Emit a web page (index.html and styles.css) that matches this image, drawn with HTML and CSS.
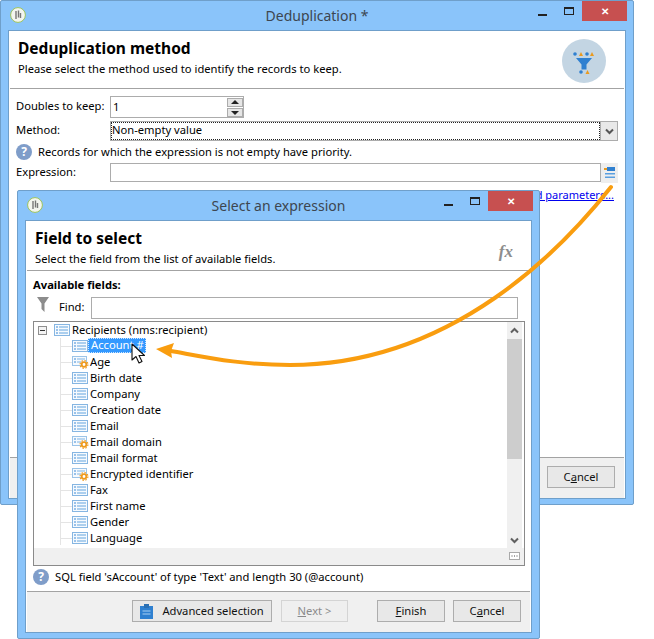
FILE: index.html
```html
<!DOCTYPE html>
<html lang="en">
<head>
    <meta charset="UTF-8">
    <title>Deduplication</title>
    <link rel="stylesheet" href="styles.css">
</head>
<body>
<svg class="defs" width="0" height="0">
    <symbol id="field" viewBox="0 0 16 12">
        <rect x="0.5" y="0.5" width="15" height="11" fill="#f6fafe" stroke="#86b6e2"/>
        <rect x="2" y="2.500" width="2" height="1" fill="#3c8ad6"/>
        <rect x="5" y="2.500" width="9" height="1" fill="#63a3de"/>
        <rect x="2" y="5.500" width="2" height="1" fill="#3c8ad6"/>
        <rect x="5" y="5.500" width="9" height="1" fill="#63a3de"/>
        <rect x="2" y="8.500" width="2" height="1" fill="#3c8ad6"/>
        <rect x="5" y="8.500" width="9" height="1" fill="#63a3de"/>
    </symbol>
    <symbol id="calc" viewBox="0 0 17 13">
        <rect x="0.5" y="0.5" width="14" height="9" fill="#f6fafe" stroke="#9cc4e8"/>
        <rect x="2" y="2.500" width="2" height="1" fill="#3c8ad6"/>
        <rect x="5" y="2.500" width="8" height="1" fill="#7fb3e3"/>
        <rect x="2" y="5.500" width="2" height="1" fill="#3c8ad6"/>
        <rect x="5" y="5.500" width="4" height="1" fill="#7fb3e3"/>
        <circle cx="12" cy="8.500" r="2.300" fill="#fff" stroke="#ee9a1e" stroke-width="1.800"/>
        <circle cx="12" cy="8.500" r="3.900" fill="none" stroke="#ee9a1e" stroke-width="1.200" stroke-dasharray="1.500 1.560"/>
    </symbol>
    <symbol id="logo" viewBox="0 0 16 16">
        <circle cx="8" cy="8" r="7.4" fill="#f3f5ef" stroke="#9cc35c"/>
        <path d="M6 4v8M8.5 3.500v7M10.500 6v5" stroke="#777" stroke-width="1.400" fill="none"/>
    </symbol>
</svg>

<div class="window main-window">
    <div class="titlebar">
        <svg class="app-icon"><use href="#logo"/></svg>
        <div class="title">Deduplication *</div>
        <div class="controls">
            <span class="ctl-min"></span>
            <span class="ctl-max"></span>
            <span class="ctl-close">&#x2715;</span>
        </div>
    </div>
    <div class="client">
        <div class="header main-header">
            <div>
                <h1>Deduplication method</h1>
                <p>Please select the method used to identify the records to keep.</p>
            </div>
            <svg class="method-icon" width="44" height="44" viewBox="0 0 44 44">
                <circle cx="22" cy="22" r="22" fill="#c3d5e3"/>
                <circle cx="13" cy="15" r="1.800" fill="#2f80d0"/>
                <path d="M17 17l2-4 2 4zM28 17l2-4 2 4z" fill="#ea9a1f"/>
                <circle cx="25" cy="15" r="1.800" fill="#2f80d0"/>
                <path d="M14 19h16l-5.500 6.500v5h-5v-5z" fill="#2f80d0"/>
                <circle cx="19" cy="33" r="1.800" fill="#2f80d0"/>
                <path d="M23.500 35l2-4 2 4z" fill="#ea9a1f"/>
            </svg>
        </div>
        <div class="form">
            <div class="row row-spin">
                <label>Doubles to keep:</label>
                <div class="spin">
                    <span class="spin-value">1</span>
                    <div class="spin-btns">
                        <span class="up"></span>
                        <span class="down"></span>
                    </div>
                </div>
            </div>
            <div class="row row-select">
                <label>Method:</label>
                <div class="select">
                    <span class="select-value">Non-empty value</span>
                    <span class="select-btn"><svg width="9" height="7" viewBox="0 0 9 7"><path d="M1 1.500l3.500 3.500 3.500-3.500" fill="none" stroke="#555" stroke-width="2"/></svg></span>
                </div>
            </div>
            <div class="info-row">
                <span class="help">?</span>
                <span>Records for which the expression is not empty have priority.</span>
            </div>
            <div class="row row-expr">
                <label>Expression:</label>
                <div class="expr">
                    <span class="expr-input"></span>
                    <span class="expr-btn">
                        <svg width="11" height="12" viewBox="0 0 11 12">
                            <rect x="0" y="1" width="3" height="2" fill="#ea9a1f"/>
                            <rect x="3" y="0" width="8" height="4" fill="#2f80d0"/>
                            <rect x="1" y="6" width="10" height="1.500" fill="#5a9fe0"/>
                            <rect x="1" y="9.500" width="10" height="1.500" fill="#5a9fe0"/>
                        </svg>
                    </span>
                </div>
            </div>
            <div class="link-row"><a href="#">d parameters...</a></div>
        </div>
        <div class="footer">
            <button class="btn"><span>C<u>a</u>ncel</span></button>
        </div>
    </div>
</div>

<div class="window expr-window">
    <div class="titlebar">
        <svg class="app-icon"><use href="#logo"/></svg>
        <div class="title">Select an expression</div>
        <div class="controls">
            <span class="ctl-min"></span>
            <span class="ctl-max"></span>
            <span class="ctl-close">&#x2715;</span>
        </div>
    </div>
    <div class="client">
        <div class="header expr-header">
            <div>
                <h1>Field to select</h1>
                <p>Select the field from the list of available fields.</p>
            </div>
            <span class="fx">fx</span>
        </div>
        <div class="picker">
            <div class="picker-label">Available fields:</div>
            <div class="find">
                <svg width="12" height="15" viewBox="0 0 12 15"><path d="M0 0h12L7.500 6.500V15l-3-3V6.500z" fill="#8c8c8c"/></svg>
                <span class="find-label">Find:</span>
                <span class="find-input"></span>
            </div>
            <div class="tree">
                <div class="tree-top">
                    <div class="tree-list">
                        <div class="root">
                            <span class="expander"></span>
                            <svg class="root-icon"><use href="#field"/></svg>
                            <span class="root-name">Recipients (nms:recipient)</span>
                        </div>
                        <ul>
                            <li><svg class="leaf"><use href="#field"/></svg><span class="selected">Account #</span></li>
                            <li><svg class="leaf-calc"><use href="#calc"/></svg><span>Age</span></li>
                            <li><svg class="leaf"><use href="#field"/></svg><span>Birth date</span></li>
                            <li><svg class="leaf"><use href="#field"/></svg><span>Company</span></li>
                            <li><svg class="leaf"><use href="#field"/></svg><span>Creation date</span></li>
                            <li><svg class="leaf"><use href="#field"/></svg><span>Email</span></li>
                            <li><svg class="leaf-calc"><use href="#calc"/></svg><span>Email domain</span></li>
                            <li><svg class="leaf"><use href="#field"/></svg><span>Email format</span></li>
                            <li><svg class="leaf-calc"><use href="#calc"/></svg><span>Encrypted identifier</span></li>
                            <li><svg class="leaf"><use href="#field"/></svg><span>Fax</span></li>
                            <li><svg class="leaf"><use href="#field"/></svg><span>First name</span></li>
                            <li><svg class="leaf"><use href="#field"/></svg><span>Gender</span></li>
                            <li><svg class="leaf"><use href="#field"/></svg><span>Language</span></li>
                        </ul>
                    </div>
                    <div class="vscroll">
                        <svg width="9" height="7" viewBox="0 0 9 7"><path d="M1 5.500l3.500-3.500 3.500 3.500" fill="none" stroke="#606060" stroke-width="2"/></svg>
                        <span class="thumb"></span>
                        <svg class="scroll-down" width="9" height="7" viewBox="0 0 9 7"><path d="M1 1.500l3.500 3.500 3.500-3.500" fill="none" stroke="#606060" stroke-width="2"/></svg>
                    </div>
                </div>
                <div class="hscroll">
                    <span class="corner">
                        <svg width="11" height="8" viewBox="0 0 11 8"><rect x="0.500" y="0.500" width="10" height="7" fill="#fff" stroke="#a9a9a9"/><path d="M2.500 4h1M5 4h1M7.500 4h1" stroke="#444"/></svg>
                    </span>
                </div>
            </div>
            <div class="info-row sql-row">
                <span class="help">?</span>
                <span>SQL field 'sAccount' of type 'Text' and length 30 (@account)</span>
            </div>
        </div>
        <div class="footer">
            <button class="btn btn-advanced">
                <svg width="13" height="15" viewBox="0 0 13 15"><rect x="0" y="2" width="13" height="13" fill="#2f80d0"/><rect x="4" y="0" width="5" height="4" fill="#2a6fb3"/><path d="M2.500 7h8M2.500 10h8" stroke="#a9d0f3"/></svg>
                <span>Advanced selection</span>
            </button>
            <button class="btn btn-next" disabled><span><u>N</u>ext &gt;</span></button>
            <button class="btn btn-finish"><span><u>F</u>inish</span></button>
            <button class="btn"><span>C<u>a</u>ncel</span></button>
        </div>
    </div>
</div>

<svg class="callout" width="654" height="639" viewBox="0 0 654 639">
    <path d="M611 187C565 245 455 365 290 365C240 365 205 357 171 351" fill="none" stroke="#f99d0f" stroke-width="4" stroke-linecap="round"/>
    <path d="M156 349L174 343L171 351L172 358Z" fill="#f99d0f"/>
</svg>
<svg class="pointer" width="16" height="22" viewBox="0 0 16 22">
    <path d="M1 1V17L5 13.500L8 20L11 18.500L8 12.500H13.500Z" fill="#fff" stroke="#111" stroke-width="1.100" stroke-linejoin="round"/>
</svg>
</body>
</html>
```

FILE: styles.css
```css
html, body {
    margin: 0;
    padding: 0;
}

body {
    position: relative;
    width: 654px;
    height: 639px;
    overflow: hidden;
    background-color: #fff;
    font-family: "Noto Sans", sans-serif;
    font-size: 11.2px;
    color: #000;
}

.defs {
    position: absolute;
}

/* windows */
.window {
    position: absolute;
    box-sizing: border-box;
    display: flex;
    flex-direction: column;
    background-color: #8ac4fa;
    border: 1px solid #6f9fca;
    border-radius: 2px;
    padding: 0 7px 5px;
}

.main-window {
    left: 0;
    top: 0;
    width: 634px;
    height: 505px;
}

.expr-window {
    left: 17px;
    top: 190px;
    width: 523px;
    height: 449px;
}

.titlebar {
    position: relative;
    flex: none;
    height: 29px;
    display: flex;
    align-items: center;
    justify-content: center;
}

.app-icon {
    position: absolute;
    left: 2px;
    top: 6px;
    width: 16px;
    height: 16px;
}

.title {
    font-size: 14px;
    color: #3d4650;
}

.controls {
    position: absolute;
    right: -1px;
    top: 0;
    display: flex;
}

.ctl-min {
    width: 9px;
    height: 2px;
    margin: 13px 17px 0 0;
    background-color: #222;
}

.ctl-max {
    box-sizing: border-box;
    width: 10px;
    height: 8px;
    margin: 6px 8px 0 0;
    border: 1px solid #222;
    border-top-width: 2px;
}

.ctl-close {
    width: 45px;
    height: 20px;
    line-height: 20px;
    text-align: center;
    background-color: #c75050;
    color: #fff;
    font-size: 10px;
    font-weight: bold;
}

.client {
    flex: 1;
    min-height: 0;
    display: flex;
    flex-direction: column;
    background-color: #fff;
    border: 1px solid #6f9fca;
    padding: 0 1px;
}

/* header strip */
.header {
    flex: none;
    box-sizing: border-box;
    display: flex;
    justify-content: space-between;
    padding: 7px 0 0 8px;
    border-bottom: 1px solid #a3a3a3;
}

.main-header {
    height: 58px;
}

.expr-header {
    height: 50px;
}

.header h1 {
    margin: 0;
    font-size: 15.5px;
    line-height: 20px;
    font-weight: bold;
}

.header p {
    margin: 3px 0 0;
    line-height: 15px;
}

.method-icon {
    margin: 1px 18px 0 0;
}

.fx {
    margin: 14px 17px 0 0;
    font-family: "Liberation Serif", serif;
    font-style: italic;
    font-weight: bold;
    font-size: 17px;
    line-height: 20px;
    color: #8d8d8d;
}

/* main form */
.form {
    flex: 1;
    min-height: 0;
    padding: 7px 6px 0;
}

.row {
    display: flex;
    align-items: center;
}

.row label {
    flex: none;
    width: 94px;
    margin-bottom: 4px;
}

.row-spin {
    height: 22px;
}

.spin {
    box-sizing: border-box;
    width: 134px;
    height: 22px;
    display: flex;
    align-items: center;
    justify-content: space-between;
    padding: 0 0 0 2px;
    border: 1px solid #acacac;
}

.spin-value {
    margin-bottom: 2px;
}

.spin-btns {
    display: flex;
    flex-direction: column;
    gap: 1px;
}

.spin-btns span {
    position: relative;
    box-sizing: border-box;
    width: 16px;
    height: 9px;
    background-color: #e6e6e6;
    border: 1px solid #acacac;
}

.spin-btns .up::after,
.spin-btns .down::after {
    content: "";
    position: absolute;
    left: 3px;
    width: 0;
    height: 0;
    border-left: 4px solid transparent;
    border-right: 4px solid transparent;
}

.spin-btns .up::after {
    top: 1px;
    border-bottom: 4px solid #222;
}

.spin-btns .down::after {
    top: 2px;
    border-top: 4px solid #222;
}

.row-select {
    height: 20px;
    margin-top: 3px;
}

.select {
    flex: 1;
    height: 20px;
    box-sizing: border-box;
    display: flex;
    border: 1px solid #acacac;
}

.select-value {
    flex: 1;
    line-height: 15px;
    padding-left: 1px;
    outline: 1px dotted #222;
    outline-offset: -1px;
}

.select-btn {
    flex: none;
    width: 16px;
    display: flex;
    align-items: center;
    justify-content: center;
    background-color: #e9e9e9;
    border-left: 1px solid #acacac;
}

.info-row {
    flex: none;
    height: 22px;
    display: flex;
    align-items: center;
    gap: 6px;
}

.info-row span:last-child {
    margin-bottom: 2px;
}

.help {
    flex: none;
    width: 16px;
    height: 16px;
    border-radius: 50%;
    background-color: #7f9dc9;
    color: #fff;
    font-size: 12px;
    font-weight: bold;
    line-height: 16px;
    text-align: center;
}

.row-expr {
    height: 20px;
}

.expr {
    flex: 1;
    height: 20px;
    display: flex;
}

.expr-input {
    flex: 1;
    box-sizing: border-box;
    height: 19px;
    border: 1px solid #acacac;
}

.expr-btn {
    flex: none;
    width: 17px;
    display: flex;
    align-items: center;
    justify-content: center;
    background-color: #eee;
}

/* only the tail of the link shows beside the dialog */
.link-row {
    margin: 4px 4px 0 0;
    font-size: 11px;
    text-align: right;
}

.link-row a {
    color: #0000ee;
}

/* footers */
.footer {
    flex: none;
    box-sizing: border-box;
    height: 41px;
    display: flex;
    justify-content: flex-end;
    align-items: center;
    padding: 0 9px 2px 0;
    background-color: #f0f0f0;
    border-top: 1px solid #a3a3a3;
}

.btn {
    box-sizing: border-box;
    width: 68px;
    height: 22px;
    padding: 0;
    display: flex;
    align-items: center;
    justify-content: center;
    background-color: #e8e8e8;
    border: 1px solid #adadad;
    font-family: inherit;
    font-size: 11.2px;
    color: #111;
}

.btn span {
    margin-bottom: 2px;
}

.btn-advanced {
    width: 140px;
    gap: 9px;
    margin-right: 9px;
}

.btn-next {
    width: 67px;
    margin-right: 29px;
    background-color: #efefef;
    border-color: #d4d4d4;
    color: #8a8a8a;
}

.btn-finish {
    margin-right: 8px;
}

/* field picker */
.picker {
    flex: 1;
    min-height: 0;
    display: flex;
    flex-direction: column;
    padding: 6px 5px 0 6px;
}

.picker-label {
    flex: none;
    font-weight: bold;
    line-height: 16px;
    height: 19px;
}

.find {
    flex: none;
    height: 23px;
    display: flex;
    align-items: center;
}

.find svg {
    flex: none;
    margin: 0 0 6px 4px;
}

.find-label {
    flex: none;
    width: 32px;
    margin: 0 0 3px 10px;
}

.find-input {
    flex: 1;
    box-sizing: border-box;
    height: 22px;
    margin-right: 7px;
    border: 1px solid #acacac;
}

.tree {
    flex: none;
    box-sizing: border-box;
    height: 245px;
    margin-top: 2px;
    display: flex;
    flex-direction: column;
    border: 1px solid #8a8a8a;
}

.tree-top {
    flex: 1;
    min-height: 0;
    display: flex;
}

.tree-list {
    flex: 1;
    overflow: hidden;
}

.root {
    height: 16px;
    display: flex;
    align-items: center;
    padding-left: 4px;
}

.root-name {
    margin-bottom: 2px;
}

.expander {
    position: relative;
    box-sizing: border-box;
    flex: none;
    width: 9px;
    height: 9px;
    background-color: #f4f4f4;
    border: 1px solid #8f8f8f;
}

.expander::after {
    content: "";
    position: absolute;
    left: 1px;
    top: 3px;
    width: 5px;
    height: 1px;
    background-color: #333;
}

.root-icon {
    flex: none;
    width: 16px;
    height: 12px;
    margin: 0 2px 0 7px;
}

.tree-list ul {
    list-style-type: none;
    margin: 0 0 0 26px;
    padding: 0;
    height: 207px;
    border-left: 1px solid #e4e4e4;
}

.tree-list li {
    position: relative;
    height: 16px;
    display: flex;
    align-items: center;
    padding-left: 11px;
}

.tree-list li span {
    margin-bottom: 2px;
}

.tree-list li::before {
    content: "";
    position: absolute;
    left: 0;
    top: 8px;
    width: 11px;
    height: 1px;
    background-color: #e4e4e4;
}

.leaf {
    flex: none;
    width: 16px;
    height: 12px;
    margin-right: 2px;
}

.leaf-calc {
    flex: none;
    width: 17px;
    height: 13px;
    margin: 1px 1px 0 0;
}

.tree-list li .selected {
    margin: 0 0 1px -2px;
    padding: 0 2px 0 3px;
    height: 15px;
    line-height: 14px;
    background-color: #3399ff;
    color: #fff;
    outline: 1px dotted #cfe6ff;
    outline-offset: -1px;
}

.vscroll {
    flex: none;
    width: 15px;
    margin-right: 2px;
    display: flex;
    flex-direction: column;
    align-items: center;
    background-color: #f0f0f0;
    padding-top: 5px;
}

.thumb {
    width: 15px;
    height: 120px;
    margin-top: 5px;
    background-color: #cdcdcd;
}

.scroll-down {
    margin-top: auto;
    margin-bottom: 4px;
}

.hscroll {
    flex: none;
    height: 17px;
    display: flex;
    justify-content: flex-end;
    background-color: #f0f0f0;
}

.corner {
    width: 15px;
    margin-right: 2px;
    padding-top: 4px;
}

.corner svg {
    display: block;
    margin: 0 auto;
}

/* arrow and mouse over the windows */
.callout {
    position: absolute;
    left: 0;
    top: 0;
    pointer-events: none;
}

.pointer {
    position: absolute;
    left: 131px;
    top: 343px;
}
```
